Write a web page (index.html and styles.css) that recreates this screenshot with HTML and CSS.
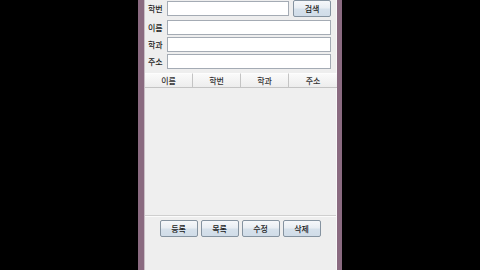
FILE: index.html
```html
<!DOCTYPE html>
<html lang="ko">
<head>
<meta charset="utf-8">
<link rel="stylesheet" href="styles.css">
</head>
<body>
<div class="window">
  <div class="content">
    <div class="form">
      <div class="row first">
        <span class="label">학번</span>
        <div class="input short"></div>
        <button class="btn search">검색</button>
      </div>
      <div class="row">
        <span class="label">이름</span>
        <div class="input"></div>
      </div>
      <div class="row">
        <span class="label">학과</span>
        <div class="input"></div>
      </div>
      <div class="row">
        <span class="label">주소</span>
        <div class="input"></div>
      </div>
    </div>
    <div class="table">
      <div class="thead">
        <div class="th">이름</div>
        <div class="th">학번</div>
        <div class="th">학과</div>
        <div class="th last">주소</div>
      </div>
      <div class="tbody"></div>
    </div>
    <div class="actions">
      <button class="btn">등록</button>
      <button class="btn">목록</button>
      <button class="btn">수정</button>
      <button class="btn">삭제</button>
    </div>
  </div>
</div>
</body>
</html>
```
FILE: styles.css
```css
html, body {
  margin: 0;
  padding: 0;
  background: #000;
  height: 270px;
  overflow: hidden;
}
body {
  font-family: "Noto Sans CJK KR", "Noto Sans", sans-serif;
  font-size: 8px;
  font-weight: 500;
  color: #222;
}
.window {
  margin-left: 138px;
  width: 193px;
  height: 270px;
  border-left: 6px solid #8a6a80;
  border-right: 5px solid #8a6a80;
  background: #eeeeee;
}
.content {
  display: flex;
  flex-direction: column;
  height: 270px;
  border-left: 1px solid #c9bfc6;
  border-right: 1px solid #f8f8f8;
  box-sizing: border-box;
}
.form {
  display: flex;
  flex-direction: column;
  gap: 2px;
  padding: 0 5px 0 3px;
}
.row {
  display: flex;
  align-items: center;
  height: 15px;
}
.row.first {
  height: 17px;
  margin-bottom: 1px;
}
.label {
  width: 19px;
  line-height: 15px;
  color: #222;
  flex: none;
}
.input {
  height: 15px;
  flex: 1;
  box-sizing: border-box;
  background: #fff;
  border: 1px solid #a4abb4;
}
.input.short {
  flex: none;
  width: 122px;
}
.btn {
  font-family: "Noto Sans CJK KR", "Noto Sans", sans-serif;
  font-size: 8px;
  font-weight: 500;
  color: #1a1a1a;
  width: 38px;
  height: 17px;
  padding: 0;
  box-sizing: border-box;
  border: 1px solid #8593a0;
  border-radius: 2px;
  background: linear-gradient(#f6f8fa 0%, #e9eef3 45%, #d6e1eb 55%, #d0dce8 100%);
  line-height: 15px;
}
.btn.search {
  margin-left: 4px;
}
.table {
  margin-top: 4px;
  display: flex;
  flex-direction: column;
  height: 142px;
}
.thead {
  display: grid;
  grid-template-columns: 48px 48px 48px 48px;
  height: 15px;
}
.th {
  box-sizing: border-box;
  border-right: 1px solid #c4c4c4;
  border-bottom: 1px solid #c4c4c4;
  border-top: 1px solid #fdfdfd;
  background: linear-gradient(#fafafa, #ededed);
  text-align: center;
  line-height: 13px;
  color: #333;
}
.th.last {
  border-right: none;
}
.tbody {
  flex: 1;
  background: #efefef;
}
.actions {
  border-top: 1px solid #cfcfcf;
  box-shadow: inset 0 1px 0 #fbfbfb;
  display: flex;
  justify-content: center;
  gap: 3px;
  padding-top: 4px;
  padding-right: 1px;
  flex: 1;
}
```
